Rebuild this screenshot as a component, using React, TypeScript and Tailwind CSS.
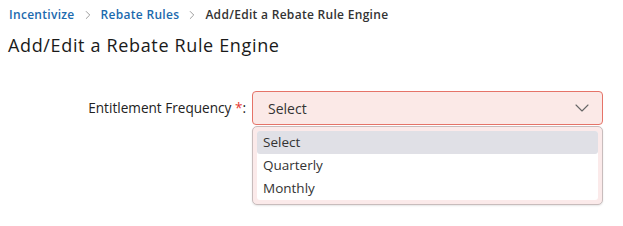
import { ChevronRight, ChevronDown } from "lucide-react";

const options = ["Select", "Quarterly", "Monthly"];

export default function App() {
  return (
    <div className="w-[623px] h-[226px] bg-white font-['Open_Sans',sans-serif] text-[#222]">
      <div className="px-[9px] pt-[6px]">
        {/* Breadcrumb */}
        <nav className="flex items-center gap-[6px] text-[12px] font-semibold leading-[18px] tracking-[0.3px]">
          <span className="text-[#1b6aae]">Incentivize</span>
          <ChevronRight className="w-[14px] h-[14px] text-[#888]" strokeWidth={1.4} />
          <span className="text-[#1b6aae]">Rebate Rules</span>
          <ChevronRight className="w-[14px] h-[14px] text-[#888]" strokeWidth={1.4} />
          <span className="text-[#333]">Add/Edit a Rebate Rule Engine</span>
        </nav>
        <h1 className="mt-[9px] text-[18px] leading-[24px] font-medium text-[#1a1a1a] -ml-[1px] tracking-[0.65px]">
          Add/Edit a Rebate Rule Engine
        </h1>
      </div>

      <div className="mt-[34px] flex items-start">
        <label className="w-[252px] pr-[6px] h-[34px] flex items-center justify-end text-[13.6px] font-medium text-[#222]">
          Entitlement Frequency&nbsp;<span className="text-[#e53935]">*</span>:
        </label>
        <div className="w-[351px]">
          <div className="h-[34px] border border-[#e57368] bg-[#fbe9e7] rounded-[4px] flex items-center justify-between pl-[15px] pr-[8px] text-[14px] text-[#333]">
            <span>Select</span>
            <ChevronDown className="w-[24px] h-[24px] text-[#666]" strokeWidth={1.1} />
          </div>
          <div className="mt-[1px] border border-[#c8bcbc] bg-[#fbeaea] rounded-[5px] p-[4px] shadow-[0_1px_2px_rgba(0,0,0,0.1)]">
            <ul className="bg-white rounded-[3px] text-[13.5px] text-[#333]">
              {options.map((o, i) => (
                <li
                  key={o}
                  className={`h-[23px] flex items-center pl-[6px] ${i === 0 ? "bg-[#e0e0e6] rounded-[3px]" : ""}`}
                >
                  {o}
                </li>
              ))}
            </ul>
          </div>
        </div>
      </div>
    </div>
  );
}
